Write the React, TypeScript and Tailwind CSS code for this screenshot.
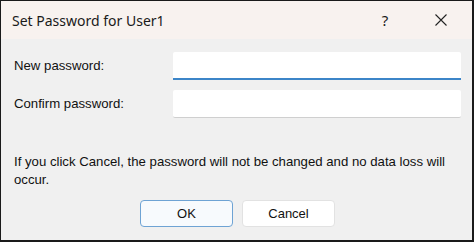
import React from 'react';

const App: React.FC = () => {
  return (
    <div className="w-[474px] h-[242px] bg-[#1a1a1a] pt-px pl-px pr-[2px] pb-[2px]">
      <div className="flex flex-col h-full bg-[#f0f0f0]">
        {/* Title bar */}
        <div className="flex items-center h-[38px] bg-[#f8f2ef] pl-[11px] font-['Noto_Sans',sans-serif] text-[14px] text-[#1a1a1a]">
          <span className="flex-1">Set Password for User1</span>
          <span className="w-[50px] text-center text-[15px]">?</span>
          <span className="w-[62px] flex justify-center">
            <svg width="12" height="12" viewBox="0 0 12 12" stroke="#222" strokeWidth="1.1">
              <path d="M0.5 0.5 L11.5 11.5 M11.5 0.5 L0.5 11.5" />
            </svg>
          </span>
        </div>

        {/* Body */}
        <div className="flex-1 flex flex-col pl-[13px] pr-[11px] font-['Liberation_Sans',Arial,sans-serif] text-[13.2px] text-[#111]">
          <div className="grid grid-cols-[159px_1fr] gap-y-[10px] items-center mt-[13px]">
            <label>New password:</label>
            <div className="h-[28px] bg-white border-b-2 border-[#3c85c8] rounded-t-[2px]" />
            <label>Confirm password:</label>
            <div className="h-[28px] bg-white border-b border-[#cfcfcf] rounded-[2px]" />
          </div>

          <p className="mt-[35px] leading-[18px]">
            If you click Cancel, the password will not be changed and no data loss will occur.
          </p>

          <div className="flex justify-center gap-[9px] mt-[11px]">
            <button className="w-[93px] h-[27px] bg-[#f7fafd] border border-[#6ea3d4] rounded-[4px] text-[13px]">
              OK
            </button>
            <button className="w-[93px] h-[27px] bg-white border border-[#e2e2e2] rounded-[4px] text-[13px]">
              Cancel
            </button>
          </div>
        </div>
      </div>
    </div>
  );
};

export default App;
